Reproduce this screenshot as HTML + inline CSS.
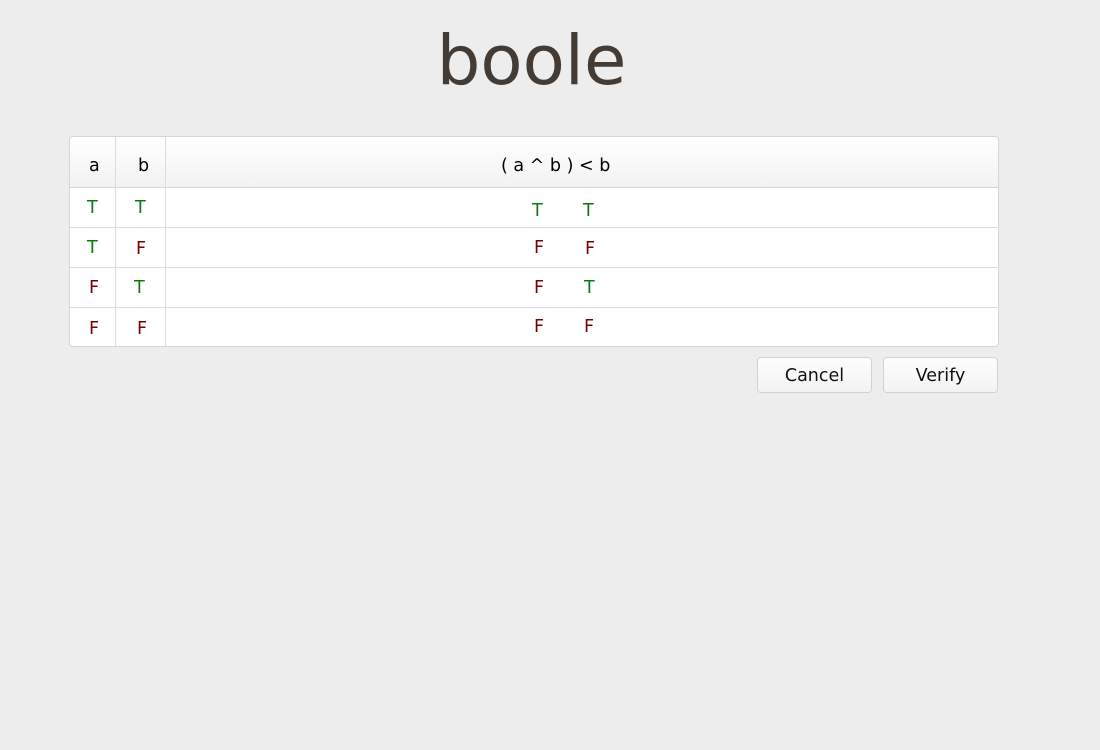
<!DOCTYPE html>
<html><head><style>
body{margin:0;width:1100px;height:750px;background:#ededed;font-family:"DejaVu Sans","Liberation Sans",sans-serif;position:relative;overflow:hidden}
.t{position:absolute;font-size:17.5px;line-height:20px}
.g{color:#0a7a0a}.r{color:#7a0000}
#title{position:absolute;left:0;width:1063px;text-align:center;top:20px;font-size:69px;color:#433b34;line-height:82px}
#tbl{position:absolute;left:69px;top:136px;width:928px;height:209px;border:1px solid #d6d6d6;border-radius:4px;background:#fff;overflow:hidden}
#hd{position:absolute;left:0;top:0;width:100%;height:50px;background:linear-gradient(#fff,#f2f2f2);border-bottom:1px solid #d6d6d6}
.h{position:absolute;left:0;width:100%;height:1px;background:#dcdcdc}
.v{position:absolute;top:0;height:100%;width:1px;background:#dcdcdc}
.btn{position:absolute;top:357px;width:113px;height:34px;border:1px solid #d2d2d2;border-radius:4px;background:linear-gradient(#fdfdfd,#f3f3f3);font-size:17.5px;text-align:center;line-height:37px;color:#111}
</style></head><body>
<div id="title">boole</div>
<div id="tbl">
<div id="hd"></div>
<div class="h" style="top:90px"></div>
<div class="h" style="top:130px"></div>
<div class="h" style="top:170px"></div>
<div class="v" style="left:45px"></div>
<div class="v" style="left:95px"></div>
</div>
<div class="t" style="left:89px;top:156px">a</div>
<div class="t" style="left:138px;top:156px">b</div>
<div class="t" style="left:501px;top:156px">( a ^ b ) &lt; b</div>
<div class="t g" style="left:87px;top:198px">T</div><div class="t g" style="left:135px;top:198px">T</div>
<div class="t g" style="left:532px;top:201px">T</div><div class="t g" style="left:583px;top:201px">T</div>
<div class="t g" style="left:87px;top:238px">T</div><div class="t r" style="left:136px;top:239px">F</div>
<div class="t r" style="left:534px;top:238px">F</div><div class="t r" style="left:585px;top:239px">F</div>
<div class="t r" style="left:89px;top:278px">F</div><div class="t g" style="left:134px;top:278px">T</div>
<div class="t r" style="left:534px;top:278px">F</div><div class="t g" style="left:584px;top:278px">T</div>
<div class="t r" style="left:89px;top:319px">F</div><div class="t r" style="left:137px;top:319px">F</div>
<div class="t r" style="left:534px;top:317px">F</div><div class="t r" style="left:584px;top:317px">F</div>
<div class="btn" style="left:757px">Cancel</div>
<div class="btn" style="left:883px">Verify</div>
</body></html>
